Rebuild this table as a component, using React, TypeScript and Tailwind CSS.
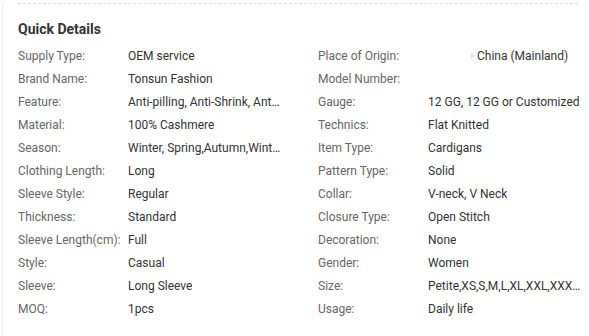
import React from 'react';

type Attr = { label: string; value: string; flag?: boolean };

const rows: [Attr, Attr][] = [
  [{ label: 'Supply Type:', value: 'OEM service' }, { label: 'Place of Origin:', value: 'China (Mainland)', flag: true }],
  [{ label: 'Brand Name:', value: 'Tonsun Fashion' }, { label: 'Model Number:', value: '' }],
  [{ label: 'Feature:', value: 'Anti-pilling, Anti-Shrink, Anti-Wrinkle, Breathable' }, { label: 'Gauge:', value: '12 GG, 12 GG or Customized' }],
  [{ label: 'Material:', value: '100% Cashmere' }, { label: 'Technics:', value: 'Flat Knitted' }],
  [{ label: 'Season:', value: 'Winter, Spring,Autumn,Winter' }, { label: 'Item Type:', value: 'Cardigans' }],
  [{ label: 'Clothing Length:', value: 'Long' }, { label: 'Pattern Type:', value: 'Solid' }],
  [{ label: 'Sleeve Style:', value: 'Regular' }, { label: 'Collar:', value: 'V-neck, V Neck' }],
  [{ label: 'Thickness:', value: 'Standard' }, { label: 'Closure Type:', value: 'Open Stitch' }],
  [{ label: 'Sleeve Length(cm):', value: 'Full' }, { label: 'Decoration:', value: 'None' }],
  [{ label: 'Style:', value: 'Casual' }, { label: 'Gender:', value: 'Women' }],
  [{ label: 'Sleeve:', value: 'Long Sleeve' }, { label: 'Size:', value: 'Petite,XS,S,M,L,XL,XXL,XXXL,4XL' }],
  [{ label: 'MOQ:', value: '1pcs' }, { label: 'Usage:', value: 'Daily life' }],
];

const Cell: React.FC<{ item: Attr }> = ({ item }) => (
  <div className="flex w-[300px] shrink-0 items-center">
    <span className="w-[110px] shrink-0 whitespace-nowrap text-[#666]">{item.label}</span>
    <span className="flex w-[153px] items-center whitespace-nowrap text-[#333]">
      {item.flag && (
        <span className="ml-[43px] mr-[2px] inline-block h-0 w-0 shrink-0 border-y-[3px] border-l-[4px] border-y-transparent border-l-[#dde3ea]" />
      )}
      <span className="truncate">{item.value}</span>
    </span>
  </div>
);

export default function App() {
  return (
    <div className="h-[336px] w-[589px] overflow-hidden bg-white font-['Roboto',sans-serif]">
      <div className="ml-[2px] h-full border-l border-[#e9ecef] pl-[15px]">
        <div className="mt-[3px] w-[560px] border-t border-dashed border-[#dedede]" />
        <h3 className="mt-[15px] text-[14px] font-bold leading-[20px] text-[#333]">Quick Details</h3>
        <div className="mt-[5px] text-[12px]">
          {rows.map((r, i) => (
            <div key={i} className="flex h-[23px] items-center">
              <Cell item={r[0]} />
              <Cell item={r[1]} />
            </div>
          ))}
        </div>
      </div>
    </div>
  );
}
